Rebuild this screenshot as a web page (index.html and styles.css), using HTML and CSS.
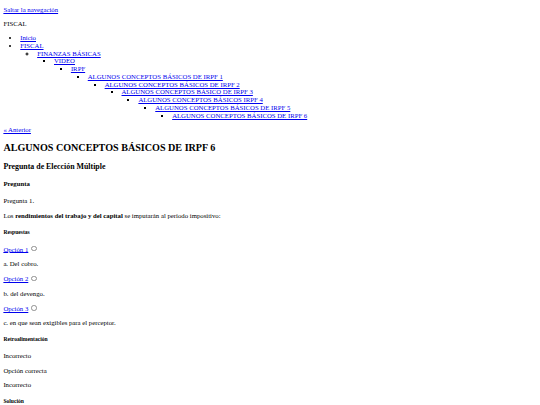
FILE: index.html
```html
<!DOCTYPE html>
<html lang="es">
<head>
<meta charset="utf-8">
<title>ALGUNOS CONCEPTOS BÁSICOS DE IRPF 6</title>
<link rel="stylesheet" href="styles.css">
</head>
<body class="doc">
<div class="skip"><a href="#main">Saltar la navegación</a></div>
<p class="site">FISCAL</p>
<ul class="nav">
  <li><a href="#">Inicio</a></li>
  <li><a href="#">FISCAL</a>
    <ul>
      <li><a href="#">FINANZAS BÁSICAS</a>
        <ul>
          <li><a href="#">VIDEO</a>
            <ul>
              <li><a href="#">IRPF</a>
                <ul>
                  <li><a href="#">ALGUNOS CONCEPTOS BÁSICOS DE IRPF 1</a>
                    <ul>
                      <li><a href="#">ALGUNOS CONCEPTOS BÁSICOS DE IRPF 2</a>
                        <ul>
                          <li><a href="#">ALGUNOS CONCEPTOS BÁSICO DE IRPF 3</a>
                            <ul>
                              <li><a href="#">ALGUNOS CONCEPTOS BÁSICOS IRPF 4</a>
                                <ul>
                                  <li><a href="#">ALGUNOS CONCEPTOS BÁSICOS DE IRPF 5</a>
                                    <ul>
                                      <li><a href="#">ALGUNOS CONCEPTOS BÁSICOS DE IRPF 6</a></li>
                                    </ul>
                                  </li>
                                </ul>
                              </li>
                            </ul>
                          </li>
                        </ul>
                      </li>
                    </ul>
                  </li>
                </ul>
              </li>
            </ul>
          </li>
        </ul>
      </li>
    </ul>
  </li>
</ul>
<p><a href="#">« Anterior</a></p>
<main id="main" class="content">
<h1 class="title">ALGUNOS CONCEPTOS BÁSICOS DE IRPF 6</h1>
<h2 class="subtitle">Pregunta de Elección Múltiple</h2>
<h3 class="section">Pregunta</h3>
<p>Pregunta 1.</p>
<p>Los <strong>rendimientos del trabajo y del capital</strong> se imputarán al período impositivo:</p>
<h4 class="minor">Respuestas</h4>
<p><a href="#">Opción 1</a> <input class="radio" type="radio" name="r"></p>
<p>a. Del cobro.</p>
<p><a href="#">Opción 2</a> <input class="radio" type="radio" name="r"></p>
<p>b. del devengo.</p>
<p><a href="#">Opción 3</a> <input class="radio" type="radio" name="r"></p>
<p>c. en que sean exigibles para el perceptor.</p>
<h4 class="minor">Retroalimentación</h4>
<p>Incorrecto</p>
<p>Opción correcta</p>
<p>Incorrecto</p>
<h4 class="minor">Solución</h4>
</main>
</body>
</html>
```
FILE: styles.css
```css
.doc {
  margin: 3.375px;
  font-family: "Liberation Serif", "Times New Roman", serif;
  font-size: 6.75px;
  line-height: 1.15;
  color: #000;
}
.doc a {
  color: #0000ee;
}
.doc p {
  margin: 1em 0;
}
.skip {
  margin-top: 3px;
}
.doc .site {
  margin-top: 5.6px;
}
.nav {
  margin: 1em 0;
  padding-left: 16.875px;
}
.nav ul {
  margin: 0;
  padding-left: 16.875px;
}
.content {
  display: block;
}
.title {
  font-size: 1.5em;
  margin: 0.83em 0;
}
.subtitle {
  font-size: 1.17em;
  margin: 1em 0;
}
.section {
  font-size: 1em;
  margin: 1.33em 0;
}
.minor {
  font-size: 0.83em;
  margin: 1.67em 0;
}
.radio {
  -webkit-appearance: none;
  appearance: none;
  box-sizing: border-box;
  width: 5.5px;
  height: 5.5px;
  margin: 1.27px 1.27px 0 1px;
  border: 0.5px solid #8f8f8f;
  border-radius: 50%;
  background: #fff;
  vertical-align: baseline;
}
```
